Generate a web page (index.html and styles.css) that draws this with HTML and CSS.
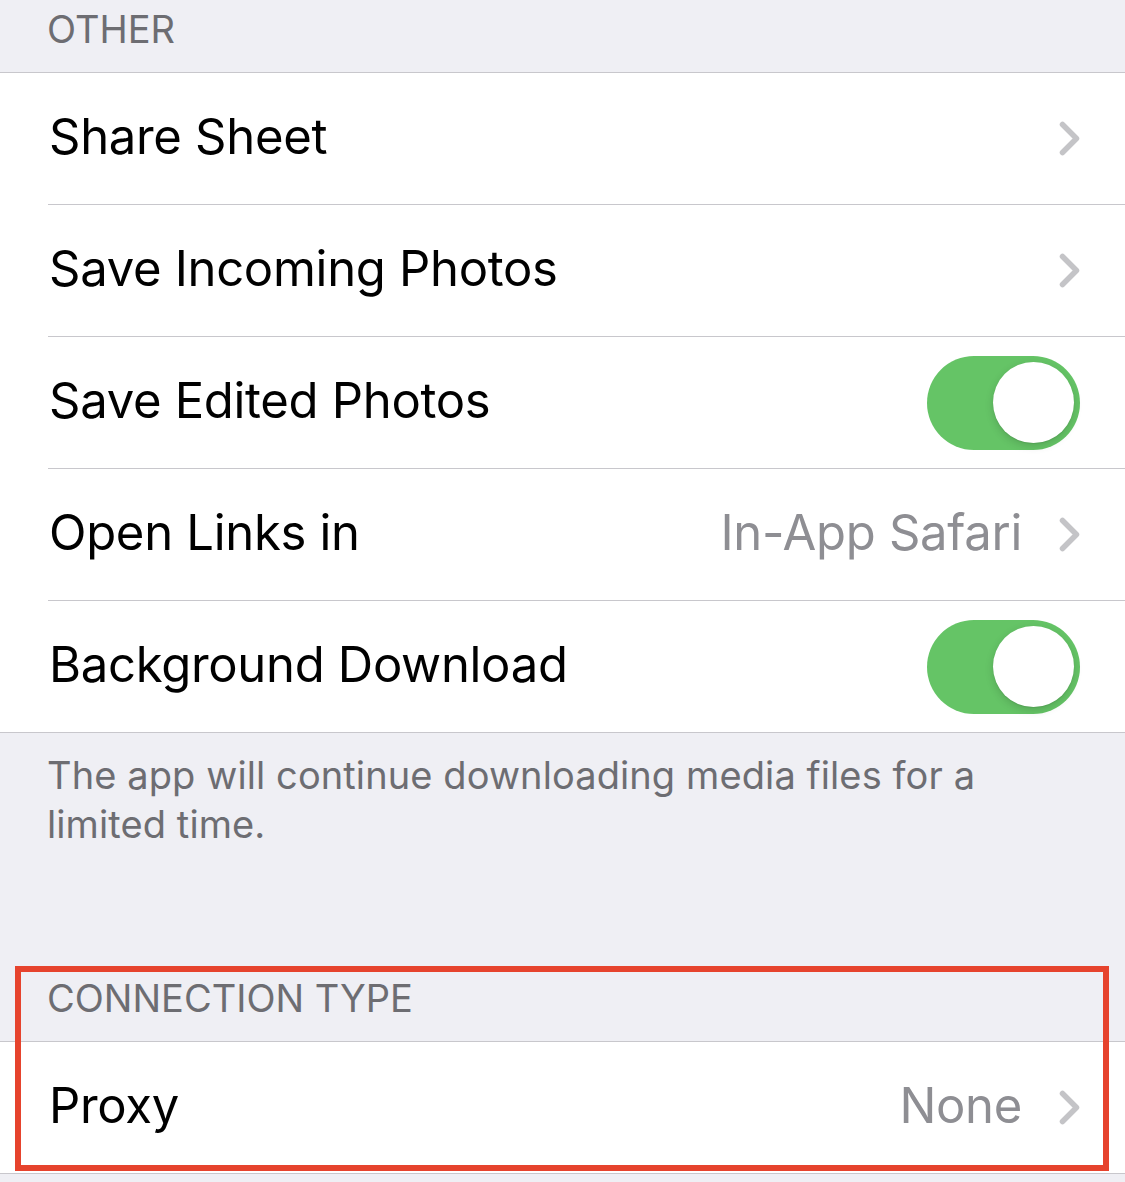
FILE: index.html
```html
<!DOCTYPE html>
<html>
<head>
<meta charset="utf-8">
<link rel="stylesheet" href="styles.css">
</head>
<body>
<div class="page">
  <div class="section-header">OTHER</div>
  <div class="group">
    <div class="row"><div class="row-inner"><span class="label">Share Sheet</span><span class="accessory"><svg class="chevron" viewBox="0 0 21 35" width="21" height="35"><polyline points="3.5,3.5 17.5,17.5 3.5,31.5"/></svg></span></div></div>
    <div class="row"><div class="row-inner"><span class="label">Save Incoming Photos</span><span class="accessory"><svg class="chevron" viewBox="0 0 21 35" width="21" height="35"><polyline points="3.5,3.5 17.5,17.5 3.5,31.5"/></svg></span></div></div>
    <div class="row"><div class="row-inner"><span class="label">Save Edited Photos</span><span class="toggle"><span class="thumb"></span></span></div></div>
    <div class="row"><div class="row-inner"><span class="label">Open Links in</span><span class="accessory"><span class="value">In-App Safari</span><svg class="chevron" viewBox="0 0 21 35" width="21" height="35"><polyline points="3.5,3.5 17.5,17.5 3.5,31.5"/></svg></span></div></div>
    <div class="row last"><div class="row-inner"><span class="label">Background Download</span><span class="toggle"><span class="thumb"></span></span></div></div>
  </div>
  <div class="section-footer">The app will continue downloading media files for a limited time.</div>
  <div class="section highlighted">
    <div class="section-header second">CONNECTION TYPE</div>
    <div class="group">
      <div class="row last"><div class="row-inner"><span class="label">Proxy</span><span class="accessory"><span class="value">None</span><svg class="chevron" viewBox="0 0 21 35" width="21" height="35"><polyline points="3.5,3.5 17.5,17.5 3.5,31.5"/></svg></span></div></div>
    </div>
    <div class="highlight-box"></div>
  </div>
</div>
</body>
</html>
```

FILE: styles.css
```css
html, body {
  margin: 0;
  padding: 0;
}
body {
  background: #efeff4;
  font-family: Inter, "Noto Sans", sans-serif;
  -webkit-font-smoothing: antialiased;
}
.page {
  width: 1125px;
  height: 1182px;
  overflow: hidden;
}
.section-header {
  height: 72px;
  box-sizing: border-box;
  padding: 7px 0 0 47px;
  font-size: 38px;
  line-height: 44px;
  color: #6d6d72;
}
.section-header.second {
  height: 75px;
  padding-top: 10px;
}
.group {
  background: #fff;
  border-top: 1px solid #c8c7cc;
  border-bottom: 1px solid #c8c7cc;
}
.row {
  padding-left: 48px;
}
.row-inner {
  height: 131px;
  border-bottom: 1px solid #c8c7cc;
  display: flex;
  align-items: center;
  justify-content: space-between;
  padding-right: 45px;
}
.row.last .row-inner {
  border-bottom: none;
}
.label {
  font-size: 49px;
  color: #000;
  padding-left: 1px;
  letter-spacing: -0.3px;
  margin-top: -4px;
}
.accessory {
  display: flex;
  align-items: center;
  gap: 37px;
}
.value {
  font-size: 49px;
  color: #8e8e93;
  letter-spacing: -0.3px;
  margin-top: -4px;
}
.chevron {
  display: block;
  fill: none;
  stroke: #c4c4c7;
  stroke-width: 5.5;
  stroke-linecap: round;
  stroke-linejoin: round;
}
.toggle {
  width: 153px;
  height: 94px;
  border-radius: 47px;
  background: #65c466;
  display: flex;
  align-items: center;
  justify-content: flex-end;
  padding-right: 6px;
  box-sizing: border-box;
}
.thumb {
  width: 81px;
  height: 81px;
  border-radius: 50%;
  background: #fff;
  box-shadow: 0 3px 8px rgba(0,0,0,0.15), 0 1px 1px rgba(0,0,0,0.08);
}
.section-footer {
  padding: 18px 120px 0 47px;
  height: 233px;
  box-sizing: border-box;
  font-size: 38px;
  line-height: 49px;
  color: #6d6d72;
  letter-spacing: 0.1px;
}
.section.highlighted {
  position: relative;
}
.highlight-box {
  position: absolute;
  left: 15px;
  top: 0;
  width: 1094px;
  height: 205px;
  box-sizing: border-box;
  border: 6px solid #e6432d;
  pointer-events: none;
}
```
